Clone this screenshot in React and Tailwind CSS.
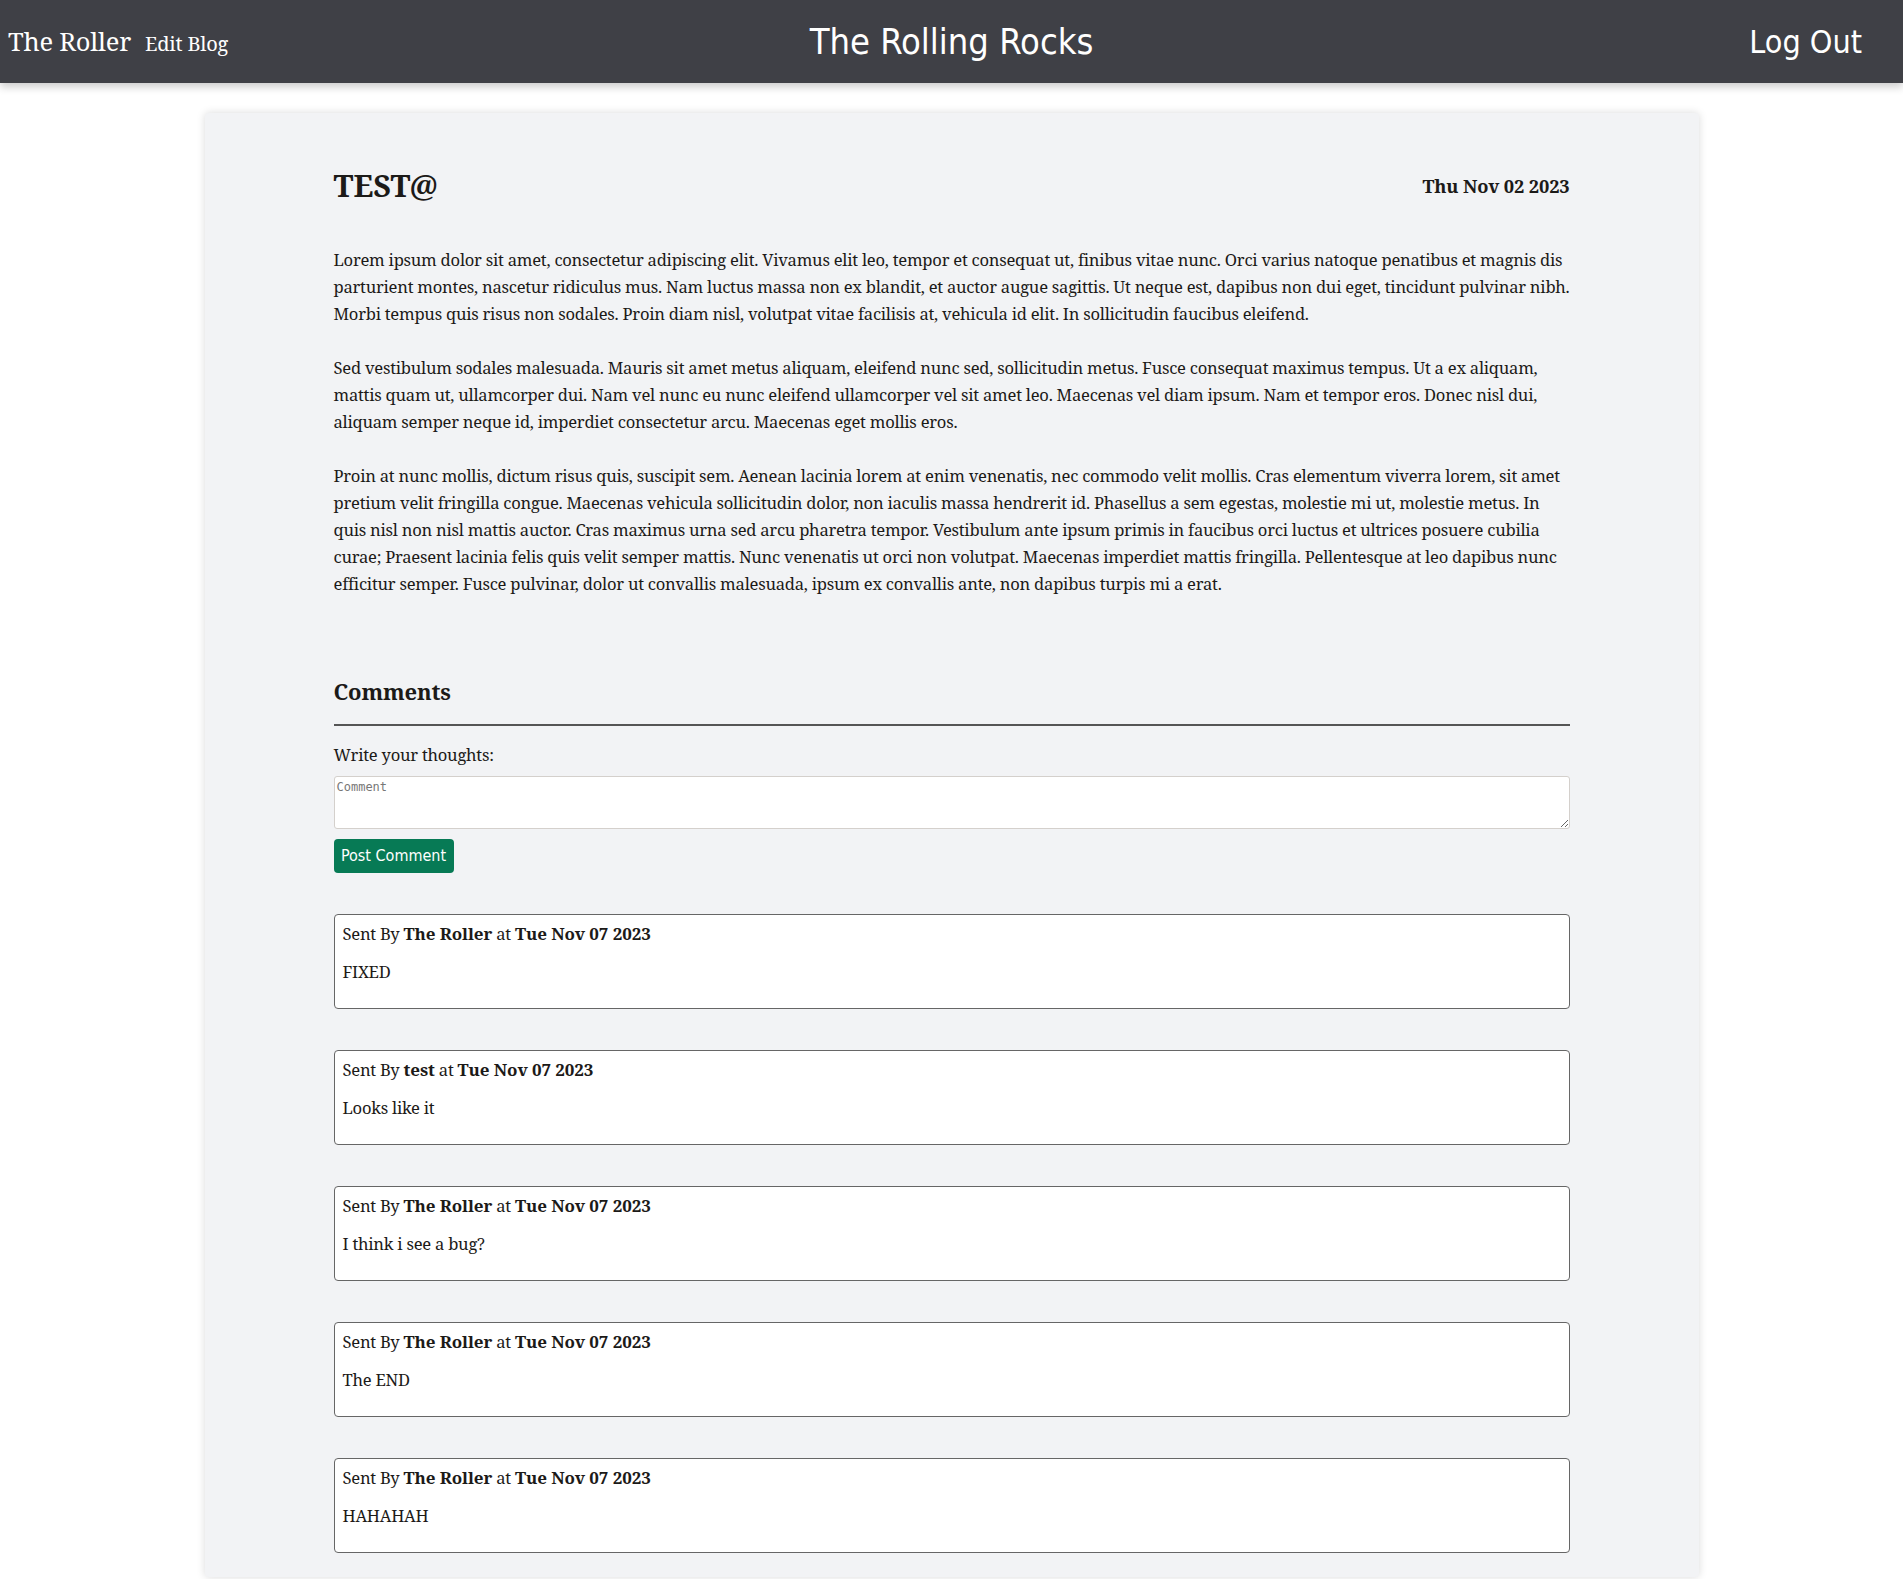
const comments = [
    { author: "The Roller", date: "Tue Nov 07 2023", text: "FIXED" },
    { author: "test", date: "Tue Nov 07 2023", text: "Looks like it" },
    { author: "The Roller", date: "Tue Nov 07 2023", text: "I think i see a bug?" },
    { author: "The Roller", date: "Tue Nov 07 2023", text: "The END" },
    { author: "The Roller", date: "Tue Nov 07 2023", text: "HAHAHAH" },
];

const paragraphs = [
    "Lorem ipsum dolor sit amet, consectetur adipiscing elit. Vivamus elit leo, tempor et consequat ut, finibus vitae nunc. Orci varius natoque penatibus et magnis dis parturient montes, nascetur ridiculus mus. Nam luctus massa non ex blandit, et auctor augue sagittis. Ut neque est, dapibus non dui eget, tincidunt pulvinar nibh. Morbi tempus quis risus non sodales. Proin diam nisl, volutpat vitae facilisis at, vehicula id elit. In sollicitudin faucibus eleifend.",
    "Sed vestibulum sodales malesuada. Mauris sit amet metus aliquam, eleifend nunc sed, sollicitudin metus. Fusce consequat maximus tempus. Ut a ex aliquam, mattis quam ut, ullamcorper dui. Nam vel nunc eu nunc eleifend ullamcorper vel sit amet leo. Maecenas vel diam ipsum. Nam et tempor eros. Donec nisl dui, aliquam semper neque id, imperdiet consectetur arcu. Maecenas eget mollis eros.",
    "Proin at nunc mollis, dictum risus quis, suscipit sem. Aenean lacinia lorem at enim venenatis, nec commodo velit mollis. Cras elementum viverra lorem, sit amet pretium velit fringilla congue. Maecenas vehicula sollicitudin dolor, non iaculis massa hendrerit id. Phasellus a sem egestas, molestie mi ut, molestie metus. In quis nisl non nisl mattis auctor. Cras maximus urna sed arcu pharetra tempor. Vestibulum ante ipsum primis in faucibus orci luctus et ultrices posuere cubilia curae; Praesent lacinia felis quis velit semper mattis. Nunc venenatis ut orci non volutpat. Maecenas imperdiet mattis fringilla. Pellentesque at leo dapibus nunc efficitur semper. Fusce pulvinar, dolor ut convallis malesuada, ipsum ex convallis ante, non dapibus turpis mi a erat.",
];

const serif = "font-['Noto_Serif','DejaVu_Serif','Liberation_Serif',serif]";
const sans = "font-['DejaVu_Sans_Condensed','DejaVu_Sans',sans-serif]";
// bold runs are a touch wider in the reference than the regular ones
const strong = "font-bold text-[17px] tracking-[-0.1px]";

const App = () => {
    return (
        <div className={`min-h-screen bg-white text-[#1c1a18] ${serif}`}>
            <header className="h-[83px] bg-[#3f4046] text-white flex items-center justify-between px-2 shadow-[0_4px_8px_rgba(0,0,0,0.2)]">
                <div className="flex items-baseline gap-[14px] w-[400px]">
                    <span className="text-[25.5px] tracking-[-0.2px]">The Roller</span>
                    <span className="text-[20px] tracking-[-0.2px]">Edit Blog</span>
                </div>
                <h1 className={`text-[36px] ${sans}`}>The Rolling Rocks</h1>
                <div className="w-[400px] flex justify-end pr-[33px]">
                    <span className={`text-[32px] ${sans}`}>Log Out</span>
                </div>
            </header>

            <main className="w-[1494px] mx-auto mt-[30px] bg-[#f2f3f5] rounded shadow-[0_0_8px_rgba(0,0,0,0.15)] px-[129px] pt-[50px] pb-[24px] text-[16.6px] tracking-[-0.25px]">
                <div className="flex justify-between items-center">
                    <h2 className="text-[30.5px] font-bold tracking-normal">TEST@</h2>
                    <span className="text-[18.3px] font-bold tracking-[-0.15px]">Thu Nov 02 2023</span>
                </div>

                <div className="mt-[37px] leading-[27px]">
                    {paragraphs.map((p, i) => (
                        <p key={i} className="mb-[27px]">{p}</p>
                    ))}
                </div>

                <h3 className="mt-[78px] text-[22px] font-bold tracking-[-0.15px] pb-[16px] border-b-2 border-[#555]">Comments</h3>

                <label className="block mt-[17px]">Write your thoughts:</label>
                <textarea
                    placeholder="Comment"
                    className="block w-full h-[53px] mt-[8px] bg-white border border-[#d4d0cc] rounded-[3px] px-[2px] py-[1px] text-[12px] tracking-normal font-['DejaVu_Sans_Mono',monospace] placeholder:text-[#777]"
                />
                <button className={`mt-[10px] h-[34px] w-[120px] bg-[#077a55] text-white rounded-[4px] text-[16px] tracking-normal ${sans}`}>
                    Post Comment
                </button>

                <div className="mt-[41px] flex flex-col gap-[41px]">
                    {comments.map((c, i) => (
                        <div key={i} className="h-[95px] bg-white border border-[#666] rounded-[4px] px-[8px] pt-[6px]">
                            <p>Sent By <span className={strong}>{c.author}</span> at <span className={strong}>{c.date}</span></p>
                            <p className="mt-[13px]">{c.text}</p>
                        </div>
                    ))}
                </div>
            </main>
        </div>
    );
};

export default App;
